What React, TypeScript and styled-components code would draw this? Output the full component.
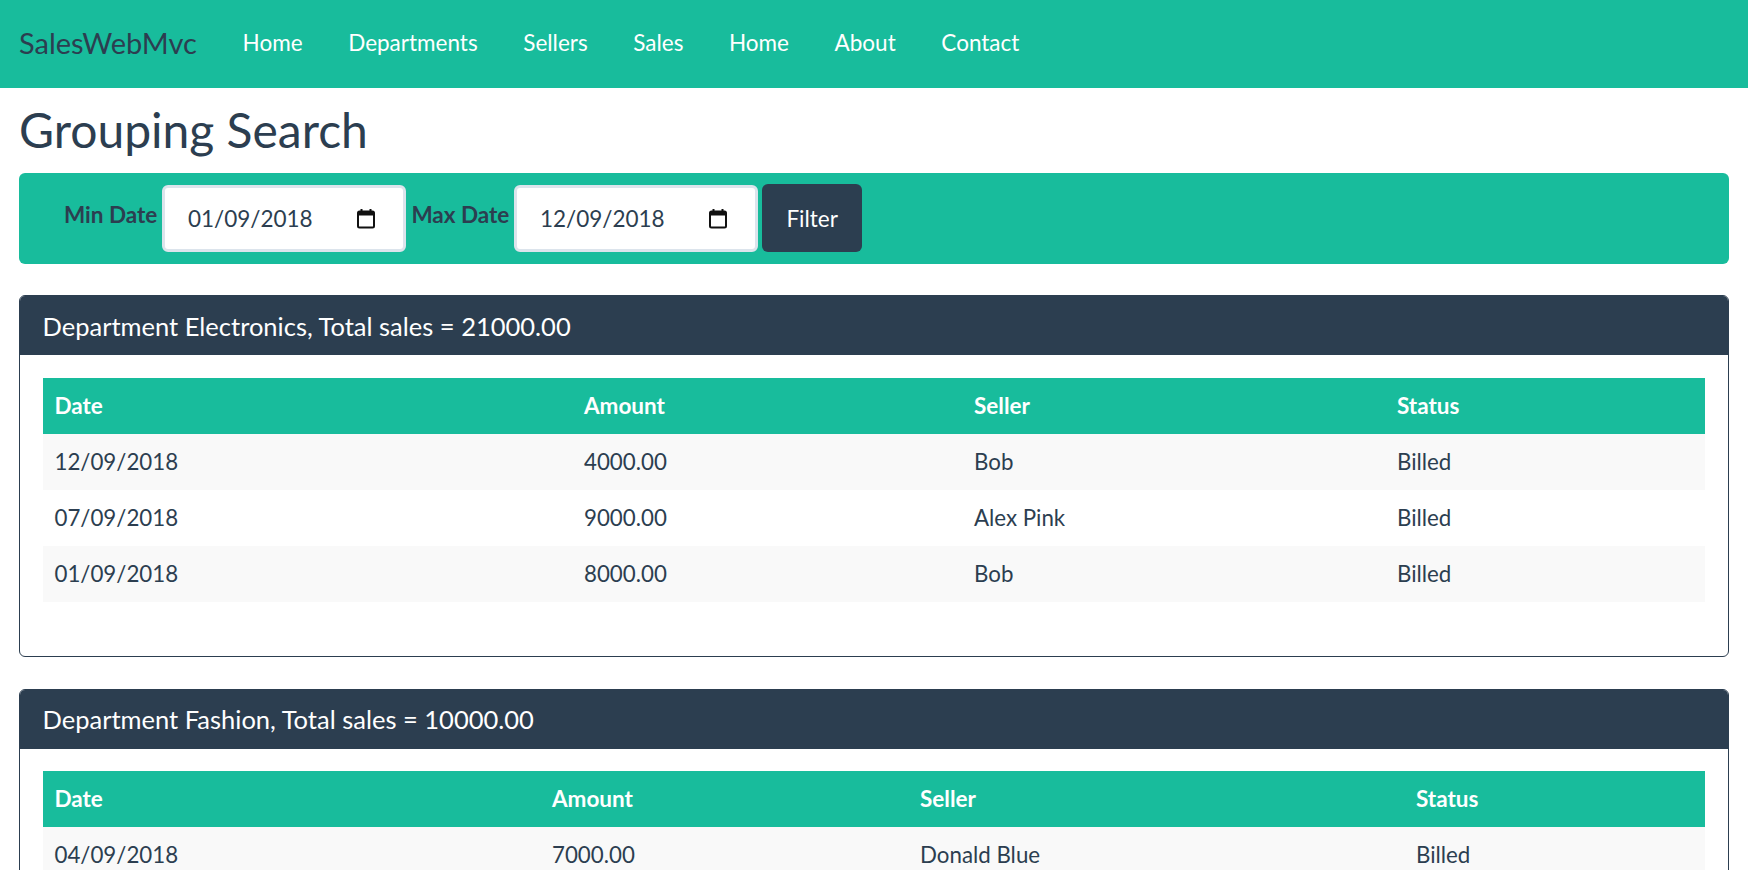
import React from "react";
import styled, { createGlobalStyle } from "styled-components";

const GlobalStyle = createGlobalStyle`
  html, body { margin: 0; padding: 0; background: #ffffff; }
  body {
    font-family: Lato, "Open Sans", "Liberation Sans", sans-serif;
    color: #2c3e50;
    font-size: 22.5px;
  }
  * { box-sizing: border-box; }
`;

const GREEN = "#18bc9c";
const DARK = "#2c3e50";

const Navbar = styled.nav`
  height: 88px;
  background: ${GREEN};
  display: flex;
  align-items: center;
  padding: 0 0 3px 19px;
`;

const Brand = styled.a`
  font-size: 29px;
  color: ${DARK};
  text-decoration: none;
  margin-right: 23px;
  line-height: 40px;
`;

const NavList = styled.ul`
  display: flex;
  list-style: none;
  margin: 0;
  padding: 0;
`;

const NavLink = styled.a`
  display: block;
  padding: 0 22.8px;
  font-size: 22.5px;
  line-height: 40px;
  color: #ffffff;
  text-decoration: none;
`;

const Main = styled.main`
  padding: 0 19px;
`;

const Title = styled.h2`
  margin: 15px 0 17px;
  font-size: 48px;
  line-height: 53px;
  font-weight: 400;
  color: ${DARK};
`;

const FilterBar = styled.form`
  height: 91px;
  background: ${GREEN};
  border-radius: 6px;
  display: flex;
  align-items: center;
  gap: 5px;
  padding: 0 0 0 45px;
`;

const FieldLabel = styled.label`
  font-size: 22.5px;
  font-weight: 700;
  color: ${DARK};
  margin-bottom: 8px;
`;

const DateBox = styled.div`
  width: 244px;
  height: 67px;
  background: #ffffff;
  border: 3px solid #dce4ec;
  border-radius: 6px;
  display: flex;
  align-items: center;
  justify-content: space-between;
  padding: 0 28px 0 22.5px;
  font-size: 22.5px;
  color: ${DARK};
`;

const FilterButton = styled.button`
  height: 68px;
  padding: 0 24px;
  margin-left: -1px;
  border: none;
  border-radius: 6px;
  background: ${DARK};
  color: #ffffff;
  font-family: Lato, "Liberation Sans", sans-serif;
  font-size: 22.5px;
  margin-bottom: 1px;
`;

const Panel = styled.section`
  margin-top: 31px;
  margin-bottom: 32px;
  border: 1px solid ${DARK};
  border-radius: 6px;
  overflow: hidden;
  & + & {
    margin-top: 0;
  }
`;

const PanelHeading = styled.div`
  height: 59px;
  background: ${DARK};
  color: #ffffff;
  display: flex;
  align-items: center;
  padding: 0 22.5px;
  font-size: 25.5px;
`;

const PanelBody = styled.div`
  padding: 22.5px 23px 54px 22.5px;
`;

const Table = styled.table`
  width: 100%;
  border-collapse: collapse;
  table-layout: fixed;
`;

const Col = styled.col<{ $w: number }>`
  width: ${(p) => p.$w}px;
`;

const HeadRow = styled.tr`
  background: ${GREEN};
`;

const Th = styled.th`
  height: 56px;
  padding: 0 12px;
  text-align: left;
  font-size: 22.5px;
  font-weight: 700;
  line-height: 32px;
  color: #ffffff;
`;

const BodyRow = styled.tr`
  &:nth-child(odd) {
    background: #f9f9f9;
  }
`;

const Td = styled.td`
  height: 56px;
  padding: 0 12px;
  font-size: 22.3px;
  line-height: 32px;
  color: ${DARK};
`;

const CalendarIcon = () => (
  <svg width="18" height="21" viewBox="0 0 18 21" aria-hidden="true">
    <rect x="1" y="3.5" width="16" height="16" rx="1.5" fill="none" stroke="#111" strokeWidth="2" />
    <rect x="1" y="3.5" width="16" height="4" fill="#111" />
    <rect x="3.5" y="1" width="2" height="3.5" fill="#111" />
    <rect x="12.5" y="1" width="2" height="3.5" fill="#111" />
  </svg>
);

type Sale = { date: string; amount: string; seller: string; status: string };
type Group = { dept: string; total: string; cols: number[]; sales: Sale[] };

const groups: Group[] = [
  {
    dept: "Electronics",
    total: "21000.00",
    cols: [529.5, 390, 423, 320],
    sales: [
      { date: "12/09/2018", amount: "4000.00", seller: "Bob", status: "Billed" },
      { date: "07/09/2018", amount: "9000.00", seller: "Alex Pink", status: "Billed" },
      { date: "01/09/2018", amount: "8000.00", seller: "Bob", status: "Billed" },
    ],
  },
  {
    dept: "Fashion",
    total: "10000.00",
    cols: [497.5, 368, 496, 301],
    sales: [{ date: "04/09/2018", amount: "7000.00", seller: "Donald Blue", status: "Billed" }],
  },
];

const navItems = ["Home", "Departments", "Sellers", "Sales", "Home", "About", "Contact"];

export default function App() {
  return (
    <>
      <GlobalStyle />
      <Navbar>
        <Brand href="#">SalesWebMvc</Brand>
        <NavList>
          {navItems.map((n, i) => (
            <li key={i}>
              <NavLink href="#">{n}</NavLink>
            </li>
          ))}
        </NavList>
      </Navbar>
      <Main>
        <Title>Grouping Search</Title>
        <FilterBar onSubmit={(e) => e.preventDefault()}>
          <FieldLabel>Min Date</FieldLabel>
          <DateBox>
            <span>01/09/2018</span>
            <CalendarIcon />
          </DateBox>
          <FieldLabel>Max Date</FieldLabel>
          <DateBox>
            <span>12/09/2018</span>
            <CalendarIcon />
          </DateBox>
          <FilterButton type="submit">Filter</FilterButton>
        </FilterBar>
        {groups.map((g) => (
          <Panel key={g.dept}>
            <PanelHeading>
              Department {g.dept}, Total sales = {g.total}
            </PanelHeading>
            <PanelBody>
              <Table>
                <colgroup>
                  {g.cols.map((w, i) => (
                    <Col key={i} $w={w} />
                  ))}
                </colgroup>
                <thead>
                  <HeadRow>
                    <Th>Date</Th>
                    <Th>Amount</Th>
                    <Th>Seller</Th>
                    <Th>Status</Th>
                  </HeadRow>
                </thead>
                <tbody>
                  {g.sales.map((s, i) => (
                    <BodyRow key={i}>
                      <Td>{s.date}</Td>
                      <Td>{s.amount}</Td>
                      <Td>{s.seller}</Td>
                      <Td>{s.status}</Td>
                    </BodyRow>
                  ))}
                </tbody>
              </Table>
            </PanelBody>
          </Panel>
        ))}
      </Main>
    </>
  );
}
